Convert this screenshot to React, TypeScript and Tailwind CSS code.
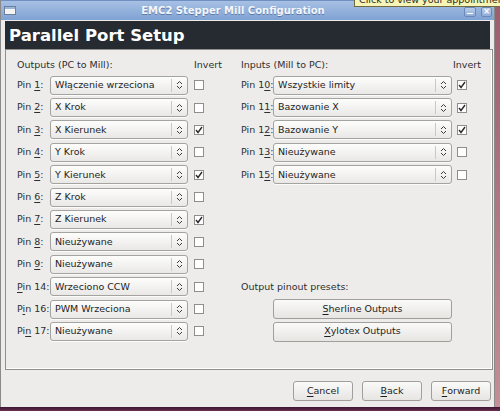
import React from "react";

type Row = { pin: string; mn: number; value: string; checked: boolean };

const outputs: Row[] = [
  { pin: "1", mn: 4, value: "Włączenie wrzeciona", checked: false },
  { pin: "2", mn: 4, value: "X Krok", checked: false },
  { pin: "3", mn: 4, value: "X Kierunek", checked: true },
  { pin: "4", mn: 4, value: "Y Krok", checked: false },
  { pin: "5", mn: 4, value: "Y Kierunek", checked: true },
  { pin: "6", mn: 4, value: "Z Krok", checked: false },
  { pin: "7", mn: 4, value: "Z Kierunek", checked: true },
  { pin: "8", mn: 4, value: "Nieużywane", checked: false },
  { pin: "9", mn: 4, value: "Nieużywane", checked: false },
  { pin: "14", mn: 0, value: "Wrzeciono CCW", checked: false },
  { pin: "16", mn: 1, value: "PWM Wrzeciona", checked: false },
  { pin: "17", mn: 2, value: "Nieużywane", checked: false },
];

const inputs: Row[] = [
  { pin: "10", mn: 5, value: "Wszystkie limity", checked: true },
  { pin: "11", mn: 5, value: "Bazowanie X", checked: true },
  { pin: "12", mn: 5, value: "Bazowanie Y", checked: true },
  { pin: "13", mn: 5, value: "Nieużywane", checked: false },
  { pin: "15", mn: 5, value: "Nieużywane", checked: false },
];

// text with a GTK-style mnemonic underline at position i
const Mn = ({ text, i }: { text: string; i: number }) => (
  <>
    {text.slice(0, i)}
    <span className="underline underline-offset-[2px] decoration-1">{text[i]}</span>
    {text.slice(i + 1)}
  </>
);

const Arrows = () => (
  <svg width="7" height="10" viewBox="0 0 7 10" fill="none" stroke="#3c3c3c" strokeWidth="1">
    <path d="M1 4 L3.5 1.5 L6 4" />
    <path d="M1 6 L3.5 8.5 L6 6" />
  </svg>
);

const Combo = ({ value, w }: { value: string; w: string }) => (
  <div
    className={`${w} flex h-[19px] items-center rounded-[3px] border border-[#a3a3a0] bg-gradient-to-b from-[#fdfdfc] to-[#e9e8e6] shadow-[0_1px_0_rgba(255,255,255,0.8)]`}
  >
    <span className="flex-1 truncate pl-[4px] text-[#1e1e1e]">{value}</span>
    <span className="h-[13px] w-px bg-[#c9c8c5]" />
    <span className="flex w-[15px] justify-center">
      <Arrows />
    </span>
  </div>
);

const Check = ({ on }: { on: boolean }) => (
  <div className="flex h-[10px] w-[10px] items-center justify-center border border-[#8e8e8b] bg-white">
    {on && (
      <svg width="8" height="8" viewBox="0 0 8 8" fill="none" stroke="#2a2a2a" strokeWidth="1.4">
        <path d="M1 4 L3 6.5 L7 1" />
      </svg>
    )}
  </div>
);

const Button = ({ children, w }: { children: React.ReactNode; w: string }) => (
  <div
    className={`${w} flex h-[20px] items-center justify-center rounded-[3px] border border-[#a09f9b] bg-gradient-to-b from-[#fafaf9] to-[#e6e5e2] text-[#1e1e1e]`}
  >
    {children}
  </div>
);

export default function App() {
  return (
    <div className="relative h-[411px] w-[500px] overflow-hidden bg-gradient-to-b from-[#9b5e6e] to-[#c48f98] font-['DejaVu_Sans',sans-serif] text-[9.5px] text-[#2e2e2e]">
      <div className="flex h-[407px] w-[495px] flex-col border-l border-r border-[#8a8a88] bg-[#edeceb]">
        {/* title bar */}
        <div className="relative flex h-[20px] items-center border-t border-[#6f8fc0] bg-gradient-to-b from-[#a7c0e4] to-[#80a2d3] pl-[3px]">
          <div className="h-[9px] w-[12px] border border-[#6b7f9c] bg-[#f4f4f2] shadow-[inset_0_2px_0_#9db6da]" />
          <div className="flex-1 pr-[14px] text-center text-[10px] font-bold text-[#f3f6fb] [text-shadow:0_1px_0_#5b78a6]">
            EMC2 Stepper Mill Configuration
          </div>
          <div className="flex gap-[5px] pr-[2px] pt-[2px]">
            <div className="flex h-[10px] w-[12px] items-end justify-center rounded-[2px] border border-[#6a88b8] bg-gradient-to-b from-[#b9cdea] to-[#90acd8] pb-[2px]">
              <div className="h-[1px] w-[6px] bg-white" />
            </div>
            <div className="flex h-[10px] w-[11px] items-center justify-center rounded-[2px] border border-[#6a88b8] bg-gradient-to-b from-[#b9cdea] to-[#90acd8] text-[8px] font-bold leading-none text-white">
              ×
            </div>
          </div>
        </div>

        {/* page header */}
        <div className="mx-[4px] mt-[1px] flex h-[28px] items-center bg-[#262b31] pl-[4px] pt-[2px] text-[16.5px] font-bold text-white">
          Parallel Port Setup
        </div>

        {/* frame */}
        <div className="mx-[4px] h-[321px] w-[488px] border border-[#8f8e8a] shadow-[inset_-1px_-1px_0_#fff] pl-[11px] pt-[7px]">
          <div className="flex">
            <div className="flex w-[224px] flex-col">
              <div className="flex h-[17px] items-center">
                <span className="w-[177px]">Outputs (PC to Mill):</span>
                <span>Invert</span>
              </div>
              {outputs.map((r) => (
                <div key={r.pin} className="flex h-[22.4px] items-center">
                  <span className="w-[33px] whitespace-nowrap">
                    <Mn text={`Pin ${r.pin}:`} i={r.mn} />
                  </span>
                  <Combo value={r.value} w="w-[138px]" />
                  <span className="ml-[6px]">
                    <Check on={r.checked} />
                  </span>
                </div>
              ))}
            </div>
            <div className="flex flex-col">
              <div className="flex h-[17px] items-center">
                <span className="w-[212px]">Inputs (Mill to PC):</span>
                <span>Invert</span>
              </div>
              {inputs.map((r) => (
                <div key={r.pin} className="flex h-[22.4px] items-center">
                  <span className="w-[32px] whitespace-nowrap">
                    <Mn text={`Pin ${r.pin}:`} i={r.mn} />
                  </span>
                  <Combo value={r.value} w="w-[179px]" />
                  <span className="ml-[5px]">
                    <Check on={r.checked} />
                  </span>
                </div>
              ))}
              <div className="h-[89.6px]" />
              <div className="flex h-[22.4px] items-center">Output pinout presets:</div>
              <div className="flex h-[22.4px] items-center pl-[32px]">
                <Button w="w-[179px]">
                  <Mn text="Sherline Outputs" i={0} />
                </Button>
              </div>
              <div className="flex h-[22.4px] items-center pl-[32px]">
                <Button w="w-[179px]">
                  <Mn text="Xylotex Outputs" i={0} />
                </Button>
              </div>
            </div>
          </div>
        </div>

        {/* bottom buttons */}
        <div className="mt-[11px] flex justify-end gap-[9px] pr-[3px]">
          <Button w="w-[60px]">
            <Mn text="Cancel" i={0} />
          </Button>
          <Button w="w-[60px]">
            <Mn text="Back" i={0} />
          </Button>
          <Button w="w-[60px]">
            <Mn text="Forward" i={0} />
          </Button>
        </div>
      </div>

      {/* bottom of desktop */}
      <div className="absolute bottom-0 left-0 h-[4px] w-[500px] bg-gradient-to-b from-[#3b1631] to-[#6c2f4f]" />

      {/* panel tooltip peeking over the title bar */}
      <div className="absolute left-[354px] top-[-7px] h-[14px] w-[150px] overflow-hidden whitespace-nowrap border border-[#6e6a3c] bg-[#f6f4b6] pl-[4px] text-[9.5px] leading-[12px] text-[#2b2b1f]">
        Click to view your appointments
      </div>
    </div>
  );
}
